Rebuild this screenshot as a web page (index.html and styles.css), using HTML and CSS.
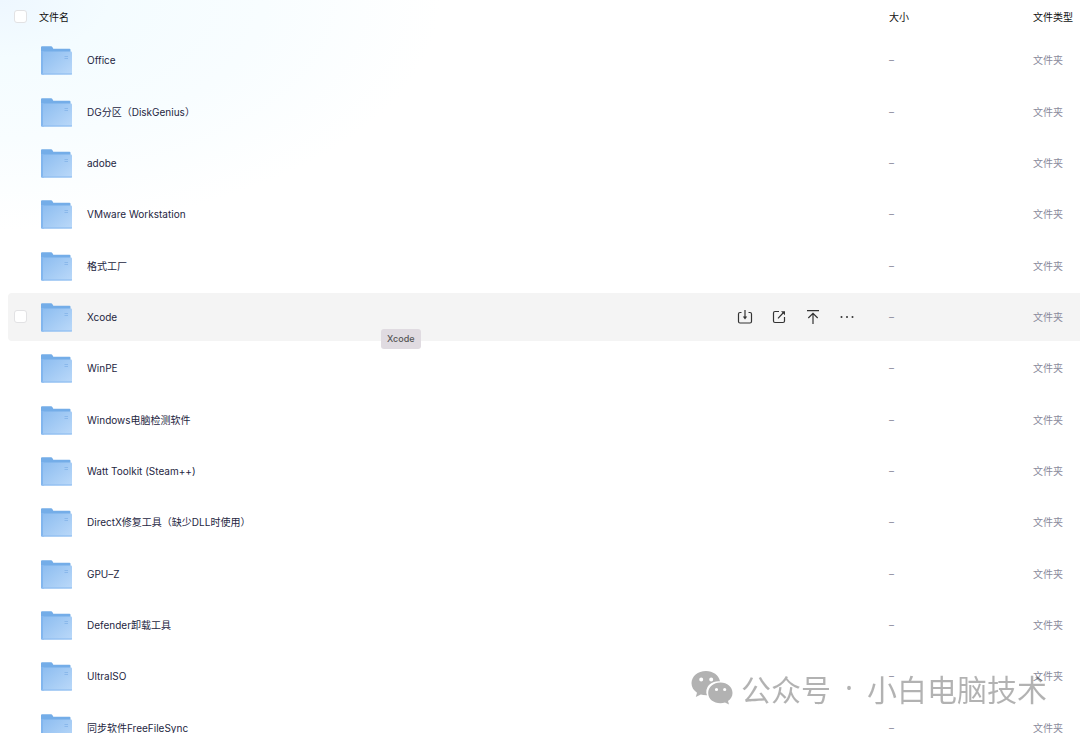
FILE: index.html
```html
<!DOCTYPE html>
<html lang="zh-CN">
<head>
    <meta charset="UTF-8">
    <meta name="viewport" content="width=device-width, initial-scale=1.0">
    <title>文件列表</title>
    <link rel="stylesheet" href="styles.css">
</head>
<body>
    <svg class="sprite" aria-hidden="true">
        <defs>
            <linearGradient id="front" x1="0" y1="0" x2="1" y2="1">
                <stop offset="0" stop-color="#8dbdf0"/>
                <stop offset="1" stop-color="#bbd9f9"/>
            </linearGradient>
        </defs>
        <symbol id="folder" viewBox="0 -1 32 30">
            <path d="M0 1.300Q0 .3 1 .3H10Q11 .3 11.500 1.300L12.300 2.800H28.500Q29.500 2.800 29.500 3.800V20H0Z" fill="#74ade8"/>
            <path d="M0 5H3V28.800H1Q0 28.800 0 27.800Z" fill="#82b6ee"/>
            <path d="M2 6.500Q2 5.500 3 5.500H30Q31 5.500 31 6.500V27.800Q31 28.800 30 28.800H2Z" fill="url(#front)"/>
            <path d="M1 27.900H31" stroke="#8fbdf0" stroke-width="1"/>
            <path d="M23.500 10.500H27M23.500 12.500H27" stroke="#83b3e8" stroke-width=".8"/>
        </symbol>
    </svg>

    <main class="file-list">
        <table class="file-table">
            <colgroup>
                <col>
                <col class="col-size">
                <col class="col-type">
            </colgroup>
            <thead>
                <tr>
                    <th>
                        <div class="head">
                            <input type="checkbox" class="check" aria-label="全选">
                            <span>文件名</span>
                        </div>
                    </th>
                    <th>大小</th>
                    <th>文件类型</th>
                </tr>
            </thead>
            <tbody>
                <tr>
                    <td><div class="name"><svg class="folder"><use href="#folder"/></svg><span>Office</span></div></td>
                    <td>–</td>
                    <td>文件夹</td>
                </tr>
                <tr>
                    <td><div class="name"><svg class="folder"><use href="#folder"/></svg><span>DG分区（DiskGenius）</span></div></td>
                    <td>–</td>
                    <td>文件夹</td>
                </tr>
                <tr>
                    <td><div class="name"><svg class="folder"><use href="#folder"/></svg><span>adobe</span></div></td>
                    <td>–</td>
                    <td>文件夹</td>
                </tr>
                <tr>
                    <td><div class="name"><svg class="folder"><use href="#folder"/></svg><span>VMware Workstation</span></div></td>
                    <td>–</td>
                    <td>文件夹</td>
                </tr>
                <tr>
                    <td><div class="name"><svg class="folder"><use href="#folder"/></svg><span>格式工厂</span></div></td>
                    <td>–</td>
                    <td>文件夹</td>
                </tr>
                <tr class="active">
                    <td>
                        <div class="name">
                            <input type="checkbox" class="check" aria-label="Xcode">
                            <svg class="folder"><use href="#folder"/></svg>
                            <span>Xcode</span>
                            <div class="actions">
                                <button type="button" class="action" aria-label="保存">
                                    <svg viewBox="0 0 16 16"><path d="M4.500 3.500H3Q1.500 3.500 1.500 5V12.500Q1.500 14 3 14H13Q14.500 14 14.500 12.500V5Q14.500 3.500 13 3.500H11.500M8 1V9"/><path class="solid" d="M5.800 7.600H10.200L8 10.600Z"/></svg>
                                </button>
                                <button type="button" class="action" aria-label="分享">
                                    <svg viewBox="0 0 16 16"><path d="M8 2.500H4Q2.500 2.500 2.500 4V12Q2.500 13.500 4 13.500H12Q13.500 13.500 13.500 12V8M7 9.300L12.500 3.500"/><path class="solid" d="M10 2.200H14V6.200Z"/></svg>
                                </button>
                                <button type="button" class="action" aria-label="置顶">
                                    <svg viewBox="0 0 16 16"><path d="M2 1.700H14M8 15V4.500M3.300 9L8 4.300L12.700 9"/></svg>
                                </button>
                                <button type="button" class="action" aria-label="更多">
                                    <svg viewBox="0 0 16 16"><circle class="solid" cx="2.500" cy="8" r="1"/><circle class="solid" cx="8" cy="8" r="1"/><circle class="solid" cx="13.500" cy="8" r="1"/></svg>
                                </button>
                            </div>
                            <div class="tooltip" role="tooltip">Xcode</div>
                        </div>
                    </td>
                    <td>–</td>
                    <td>文件夹</td>
                </tr>
                <tr>
                    <td><div class="name"><svg class="folder"><use href="#folder"/></svg><span>WinPE</span></div></td>
                    <td>–</td>
                    <td>文件夹</td>
                </tr>
                <tr>
                    <td><div class="name"><svg class="folder"><use href="#folder"/></svg><span>Windows电脑检测软件</span></div></td>
                    <td>–</td>
                    <td>文件夹</td>
                </tr>
                <tr>
                    <td><div class="name"><svg class="folder"><use href="#folder"/></svg><span>Watt Toolkit (Steam++)</span></div></td>
                    <td>–</td>
                    <td>文件夹</td>
                </tr>
                <tr>
                    <td><div class="name"><svg class="folder"><use href="#folder"/></svg><span>DirectX修复工具（缺少DLL时使用）</span></div></td>
                    <td>–</td>
                    <td>文件夹</td>
                </tr>
                <tr>
                    <td><div class="name"><svg class="folder"><use href="#folder"/></svg><span>GPU–Z</span></div></td>
                    <td>–</td>
                    <td>文件夹</td>
                </tr>
                <tr>
                    <td><div class="name"><svg class="folder"><use href="#folder"/></svg><span>Defender卸载工具</span></div></td>
                    <td>–</td>
                    <td>文件夹</td>
                </tr>
                <tr>
                    <td><div class="name"><svg class="folder"><use href="#folder"/></svg><span>UltraISO</span></div></td>
                    <td>–</td>
                    <td>文件夹</td>
                </tr>
                <tr>
                    <td><div class="name"><svg class="folder"><use href="#folder"/></svg><span>同步软件FreeFileSync</span></div></td>
                    <td>–</td>
                    <td>文件夹</td>
                </tr>
            </tbody>
        </table>
    </main>

    <div class="watermark">
        <svg class="wechat" viewBox="0 0 42 36" aria-hidden="true">
            <path fill-rule="evenodd" d="M15 1C6.800 1 .5 6.300 .5 13.200C.5 17.200 2.700 20.400 6 22.700L4.800 27L9.800 24.500Q12.500 25.400 16 25.300A12 10.500 0 0 1 29 11.300C27.800 5.200 22 1 15 1ZM10.200 7.400a2 2 0 1 1 0 4a2 2 0 1 1 0-4ZM20.200 7.400a2 2 0 1 1 0 4a2 2 0 1 1 0-4Z"/>
            <path fill-rule="evenodd" d="M29.500 12.500C22.600 12.500 17.200 17 17.200 22.900C17.200 28.900 22.600 33.200 29.500 33.200Q31.800 33.200 34 32.500L38 34.600L37 31C39.800 29.100 41.500 26.200 41.500 22.900C41.500 17 36.200 12.500 29.500 12.500ZM25.500 17.900a1.600 1.600 0 1 1 0 3.200a1.600 1.600 0 1 1 0-3.200ZM33.700 17.900a1.600 1.600 0 1 1 0 3.200a1.600 1.600 0 1 1 0-3.200Z"/>
        </svg>
        <div class="account">
            <span>公众号</span>
            <span class="dot">·</span>
            <span>小白电脑技术</span>
        </div>
    </div>
</body>
</html>
```
FILE: styles.css
```css
* {
    box-sizing: border-box;
}

body {
    margin: 0;
    font-family: Inter, "Noto Sans CJK SC", sans-serif;
    font-size: 10px;
    line-height: 16px;
    color: #25263f;
    background: #fff radial-gradient(ellipse 440px 230px at 0 0, #eef7ff 0%, #f4fcff 25%, #f8fdff 60%, #fff 100%) no-repeat;
}

.sprite {
    position: absolute;
    width: 0;
    height: 0;
}

.file-list {
    height: 100vh;
    padding-left: 8px;
    overflow: hidden;
}

.file-table {
    width: 100%;
    height: 755px;
    table-layout: fixed;
    border-spacing: 0 3px;
}

.col-size {
    width: 144px;
}

.col-type {
    width: 47px;
}

th,
td {
    padding: 0;
    text-align: left;
    white-space: nowrap;
}

thead tr {
    height: 30px;
}

th {
    padding-bottom: 3px;
    font-weight: 400;
    color: #111;
}

td {
    color: #8a8a9c;
}

td:first-child {
    color: #25263f;
    border-radius: 4px 0 0 4px;
}

.active td {
    background: #f4f4f4;
}

.head {
    display: flex;
    align-items: center;
    gap: 12px;
    padding-left: 6px;
}

.name {
    position: relative;
    display: flex;
    align-items: center;
    padding-left: 33px;
}

.active .name {
    padding-left: 6px;
}

.check {
    appearance: none;
    width: 13px;
    height: 13px;
    margin: 0;
    border: 1px solid #e2e2e4;
    border-radius: 3px;
    background: #fff;
}

.name .check {
    margin-right: 14px;
}

.folder {
    width: 32px;
    height: 30px;
    margin-right: 14px;
}

.actions {
    display: flex;
    gap: 18px;
    margin-left: auto;
    padding-right: 34px;
}

.action {
    width: 16px;
    height: 16px;
    padding: 0;
    border: none;
    background: none;
    cursor: pointer;
}

.action svg {
    display: block;
    fill: none;
    stroke: #333;
    stroke-width: 1.2;
}

.action .solid {
    fill: #333;
    stroke: none;
}

.tooltip {
    position: absolute;
    top: 27px;
    left: 373px;
    padding: 2px 6px;
    border-radius: 3px;
    background: #e0dbe1;
    color: #555;
    font-size: 9px;
    font-weight: 500;
}

.watermark {
    position: fixed;
    right: 33px;
    bottom: 25px;
    display: flex;
    align-items: center;
    gap: 8px;
    color: rgba(0, 0, 0, 0.3);
    font-family: "Noto Sans CJK SC", sans-serif;
    font-size: 30px;
    line-height: 40px;
    pointer-events: none;
}

.account {
    display: flex;
    gap: 14px;
}

.dot {
    font-family: "Noto Sans", sans-serif;
}

.wechat {
    width: 42px;
    height: 36px;
    fill: #b2b2b2;
}
```
